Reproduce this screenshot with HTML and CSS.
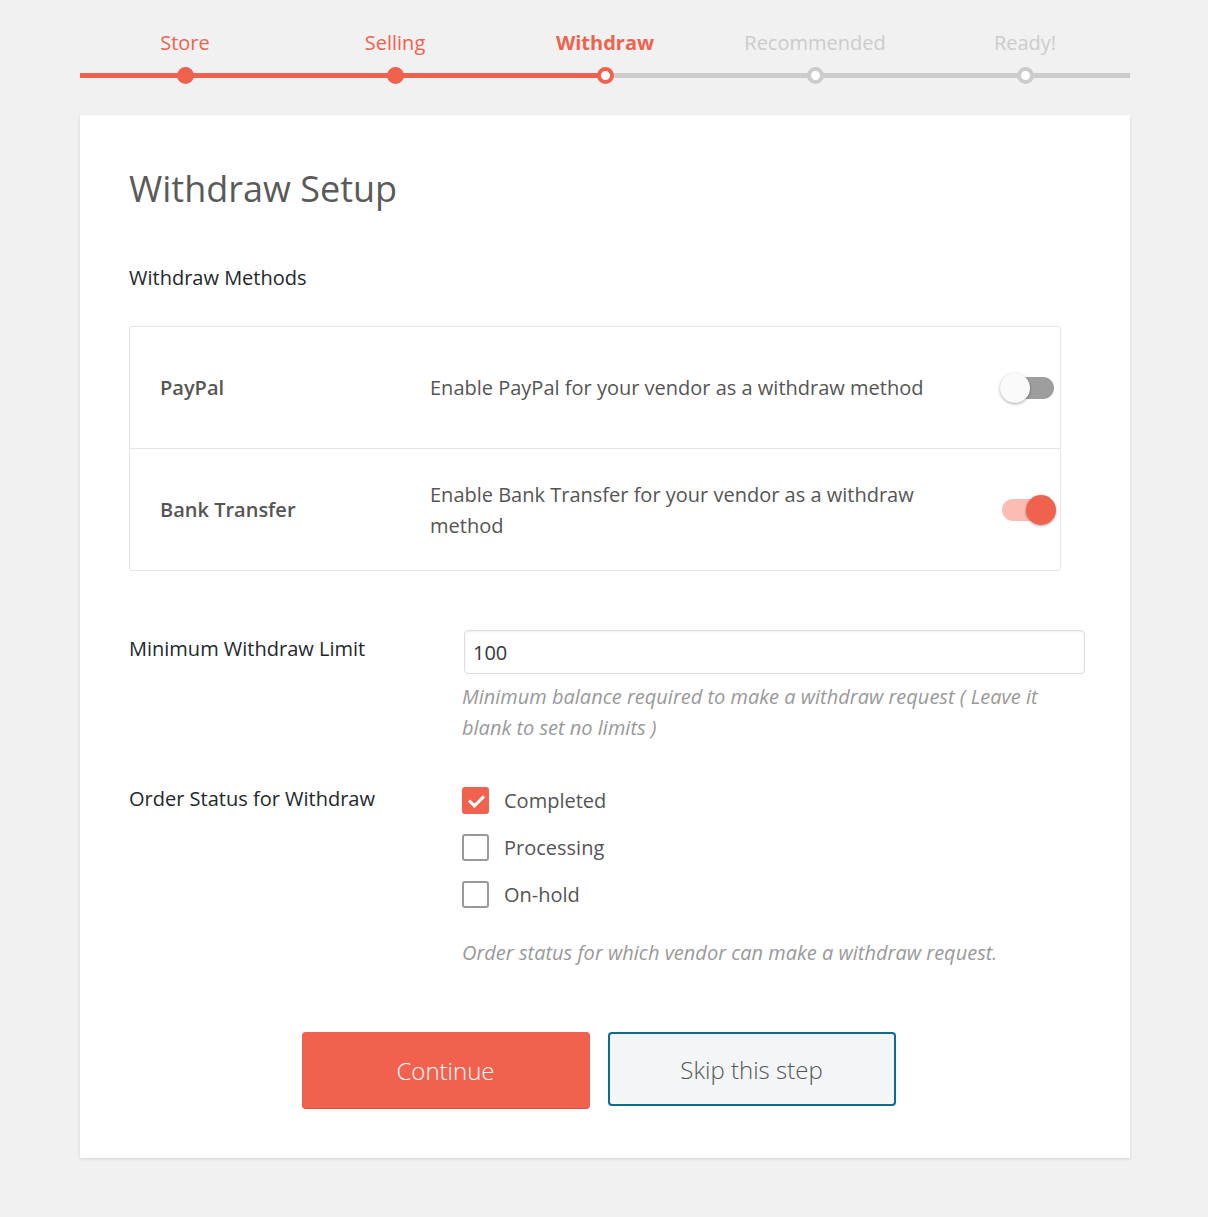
FILE: index.html
```html
<!DOCTYPE html>
<html>
<head>
    <title>Vendor Setup - Withdraw</title>
    <link rel="stylesheet" href="styles.css">
</head>
<body>
    <ol class="setup-steps">
        <li class="done">Store</li>
        <li class="done">Selling</li>
        <li class="active">Withdraw</li>
        <li>Recommended</li>
        <li>Ready!</li>
    </ol>

    <div class="setup-content">
        <h1>Withdraw Setup</h1>

        <h2 class="section-title">Withdraw Methods</h2>

        <div class="methods">
            <div class="method-row">
                <div class="method-name">PayPal</div>
                <div class="method-desc">Enable PayPal for your vendor as a withdraw method</div>
                <label class="switch">
                    <input type="checkbox">
                    <span class="slider"></span>
                </label>
            </div>
            <div class="method-row">
                <div class="method-name">Bank Transfer</div>
                <div class="method-desc">Enable Bank Transfer for your vendor as a withdraw method</div>
                <label class="switch">
                    <input type="checkbox" checked>
                    <span class="slider"></span>
                </label>
            </div>
        </div>

        <div class="form-row">
            <label class="form-label" for="withdraw_limit">Minimum Withdraw Limit</label>
            <div class="form-field">
                <input type="text" id="withdraw_limit" class="text-input" value="100">
                <p class="help">Minimum balance required to make a withdraw request ( Leave it blank to set no limits )</p>
            </div>
        </div>

        <div class="form-row">
            <div class="form-label">Order Status for Withdraw</div>
            <div class="form-field checks">
                <label class="check">
                    <input type="checkbox" checked>
                    <span class="box"></span>
                    Completed
                </label>
                <label class="check">
                    <input type="checkbox">
                    <span class="box"></span>
                    Processing
                </label>
                <label class="check">
                    <input type="checkbox">
                    <span class="box"></span>
                    On-hold
                </label>
                <p class="help help-status">Order status for which vendor can make a withdraw request.</p>
            </div>
        </div>

        <div class="actions">
            <button class="button-primary">Continue</button>
            <button class="button-skip">Skip this step</button>
        </div>
    </div>
</body>
</html>
```

FILE: styles.css
```css
body {
    font-family: "Open Sans", sans-serif;
    background: #f1f1f1;
    margin: 0;
    padding: 30px 78px 59px 80px;
    color: #555;
}

/* progress steps */
.setup-steps {
    list-style: none;
    margin: 0;
    padding: 0;
    display: flex;
    width: 1050px;
}

.setup-steps li {
    flex: 1;
    text-align: center;
    font-size: 20px;
    line-height: 26px;
    color: #ccc;
    position: relative;
    padding-bottom: 17px;
    border-bottom: 5px solid #ccc;
}

.setup-steps li::after {
    content: "";
    position: absolute;
    left: 50%;
    bottom: -11px;
    margin-left: -8.5px;
    width: 9px;
    height: 9px;
    border-radius: 50%;
    background: #fff;
    border: 4px solid #ccc;
}

.setup-steps li.done,
.setup-steps li.active {
    color: #f0624d;
}

.setup-steps li.done {
    border-color: #f0624d;
}

.setup-steps li.done::after {
    background: #f0624d;
    border-color: #f0624d;
}

.setup-steps li.active {
    font-weight: bold;
    border-image: linear-gradient(to right, #f0624d 50%, #ccc 50%) 1;
}

.setup-steps li.active::after {
    border-color: #f0624d;
}

/* card */
.setup-content {
    background: #fff;
    margin-top: 37px;
    padding: 48px 48px 50px 49px;
    box-shadow: 0 1px 3px rgba(0, 0, 0, 0.13);
    width: 953px;
}

h1 {
    font-size: 36px;
    font-weight: normal;
    color: #5a5a5a;
    margin: 0;
    line-height: 52px;
}

.section-title {
    font-size: 20px;
    font-weight: 500;
    color: #23282d;
    margin: 50px 0 0;
    line-height: 26px;
}

/* withdraw methods table */
.methods {
    margin-top: 35px;
    width: 930px;
    border: 1px solid #e5e5e5;
    border-radius: 3px;
}

.method-row {
    display: flex;
    align-items: center;
    height: 121px;
    padding: 0 6px 0 30px;
}

.method-row + .method-row {
    border-top: 1px solid #e5e5e5;
}

.method-name {
    width: 270px;
    font-size: 20px;
    font-weight: 600;
    color: #555;
}

.method-desc {
    flex: 1;
    font-size: 20px;
    line-height: 31px;
    color: #555;
    padding-right: 40px;
}

.switch {
    position: relative;
    width: 52px;
    height: 22px;
}

.switch input {
    display: none;
}

.slider {
    position: absolute;
    left: 0;
    top: 0;
    right: 0;
    bottom: 0;
    background: #9e9e9e;
    border-radius: 11px;
}

.slider::before {
    content: "";
    position: absolute;
    left: -2px;
    top: -4px;
    width: 30px;
    height: 30px;
    border-radius: 50%;
    background: #fafafa;
    box-shadow: 0 1px 3px rgba(0, 0, 0, 0.35);
}

.switch input:checked + .slider {
    background: #fbbcb3;
}

.switch input:checked + .slider::before {
    left: auto;
    right: -2px;
    background: #f0624d;
}

/* form rows */
.form-row {
    display: flex;
    margin-top: 59px;
}

.form-row + .form-row {
    margin-top: 37px;
}

.form-label {
    width: 333px;
    flex: none;
    font-size: 20px;
    font-weight: 500;
    color: #23282d;
    padding-top: 5px;
}

.form-field {
    flex: 1;
}

.text-input {
    box-sizing: border-box;
    width: 621px;
    height: 44px;
    margin-left: 2px;
    border: 1px solid #ddd;
    border-radius: 4px;
    box-shadow: inset 0 1px 2px rgba(0, 0, 0, 0.07);
    font-family: inherit;
    font-size: 20px;
    color: #32373c;
    padding: 0 8px;
}

.help {
    font-style: italic;
    font-size: 20px;
    line-height: 31px;
    color: #999;
    margin: 7px 0 0;
    width: 600px;
}

.help-status {
    margin-top: 29px;
}

/* checkboxes */
.checks {
    padding-top: 7px;
}

.check {
    display: flex;
    align-items: center;
    gap: 15px;
    font-size: 20px;
    color: #555;
    height: 27px;
    margin-bottom: 20px;
}

.check input {
    display: none;
}

.box {
    box-sizing: border-box;
    width: 27px;
    height: 27px;
    border: 2px solid #999;
    border-radius: 3px;
    position: relative;
}

.check input:checked + .box {
    background: #f0624d;
    border-color: #f0624d;
}

.check input:checked + .box::after {
    content: "";
    position: absolute;
    left: 8px;
    top: 3px;
    width: 6px;
    height: 12px;
    border: solid #fff;
    border-width: 0 3px 3px 0;
    transform: rotate(45deg);
}

/* buttons */
.actions {
    display: flex;
    justify-content: center;
    gap: 18px;
    margin-top: 64px;
    padding-right: 14px;
}

.actions button {
    width: 288px;
    font-family: inherit;
    font-size: 24px;
    font-weight: 300;
    border-radius: 4px;
    cursor: pointer;
}

.button-primary {
    height: 76px;
    background: #f0624d;
    border: none;
    color: #fff;
    box-shadow: 0 1px 0 #d9503c;
}

.button-skip {
    height: 74px;
    background: #f3f5f6;
    border: 2px solid #0a6f8f;
    color: #555;
}
```
